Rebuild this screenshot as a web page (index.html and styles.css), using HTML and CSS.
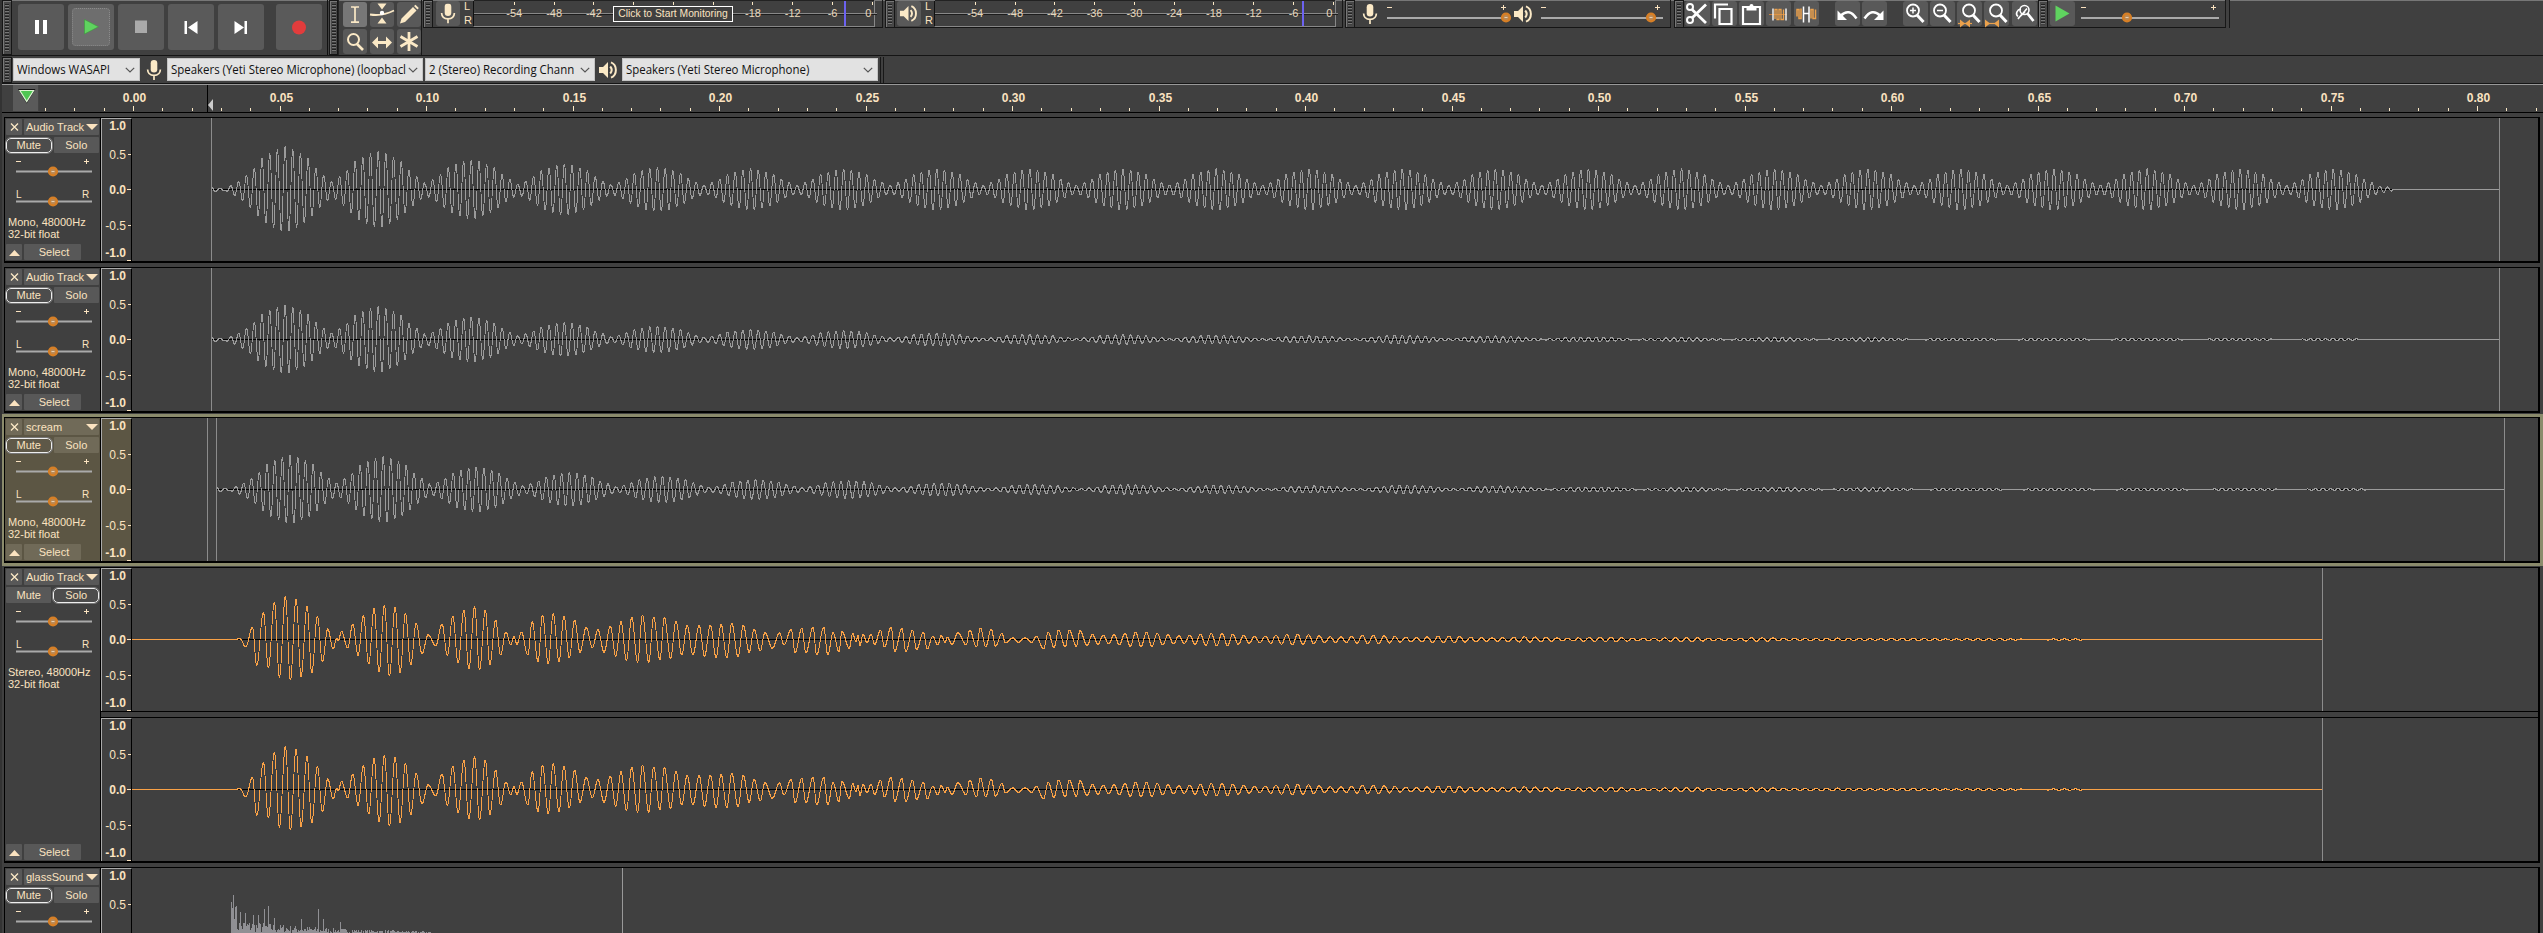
FILE: index.html
```html
<!DOCTYPE html>
<html lang="en">
<head>
<meta charset="utf-8">
<title>Audio editor</title>
<link rel="stylesheet" href="styles.css">
</head>
<body>
<svg class="defs" width="0" height="0">
  <symbol id="mic" viewBox="0 0 16 20"><rect x="4.7" y="0" width="6.6" height="12.5" rx="3.3" fill="#fbe9c6"/><path d="M1.6 9.5C1.8 13.5 4.5 15.3 8 15.3s6.200-1.800 6.400-5.800M8 15v5" fill="none" stroke="#fbe9c6" stroke-width="1.700"/></symbol>
  <symbol id="speaker" viewBox="0 0 20 18"><path d="M1 6h4l5-5v16l-5-5H1z" fill="#fbe9c6"/><path d="M12.200 5.500q3 3.500 0 7M13 1.300c6.500 2.700 6.500 12.700 0 15.400" fill="none" stroke="#fbe9c6" stroke-width="2"/></symbol>
  <symbol id="lens" viewBox="0 0 24 24"><circle cx="10" cy="9" r="6" fill="none" stroke="#fff" stroke-width="1.800"/><path d="M14 13.500l6.500 7" stroke="#fff" stroke-width="3"/></symbol>
  <symbol id="chev" viewBox="0 0 10 6"><path d="M.8.8L5 5 9.200.8" fill="none" stroke="#555" stroke-width="1.200"/></symbol>
</svg>
<div class="app">
  <header class="toolbars">
    <div class="grip tall"></div>
    <div class="transport">
      <div class="big"><svg viewBox="0 0 46 46"><path d="M17 16h4v14h-4zM25 16h4v14h-4z" fill="#fff"/></svg></div>
      <div class="big on"><svg viewBox="0 0 46 46"><path d="M16.500 15.500v14.500l14-7.200z" fill="#5fd35f" stroke="#3c9a3c" stroke-width=".6"/></svg></div>
      <div class="big"><svg viewBox="0 0 46 46"><path d="M17 16.500h12v12.500H17z" fill="#aaa"/></svg></div>
      <div class="big"><svg viewBox="0 0 46 46"><path d="M16.500 17h2.500v13h-2.500zM29.500 17v13L20 23.500z" fill="#fff"/></svg></div>
      <div class="big"><svg viewBox="0 0 46 46"><path d="M26.500 17H29v13h-2.500zM16.500 17v13l9.500-6.500z" fill="#fff"/></svg></div>
      <div class="big rec"><svg viewBox="0 0 46 46"><circle cx="23" cy="23.500" r="7" fill="#e23c3c"/></svg></div>
    </div>
    <div class="grip tall g2"></div>
    <div class="tools">
      <div class="btn on"><svg viewBox="0 0 24 24"><path d="M8 4.500h3l1 .7 1-.7h3M12 5v14M8 19.700h3l1-.7 1 .7h3" fill="none" stroke="#fbe9c6" stroke-width="1.700"/></svg></div>
      <div class="btn"><svg viewBox="0 0 24 24"><path d="M7.500 1h9L12 7zM7.500 21h9L12 15z" fill="#fbe9c6"/><path d="M0 12q12 2 24-4" fill="none" stroke="#fbe9c6" stroke-width="1.800"/><circle cx="12" cy="10.500" r="2.200" fill="#fff"/></svg></div>
      <div class="btn"><svg viewBox="0 0 24 24"><path d="M3 21l1.500-5L16 4.500l3.500 3.500L8 19.500zM17 3.500l1.500-1.300 3.300 3.300L20.500 7z" fill="#fbe9c6"/></svg></div>
      <div class="btn"><svg viewBox="0 0 24 24"><circle cx="10.500" cy="10" r="5.500" fill="none" stroke="#fbe9c6" stroke-width="2"/><path d="M14 14.500l6 6" stroke="#fbe9c6" stroke-width="2.600"/></svg></div>
      <div class="btn"><svg viewBox="0 0 24 24"><path d="M2 13l6-6v4.500h8V7l6 6-6 6v-4.500H8V19z" fill="#fbe9c6"/></svg></div>
      <div class="btn"><svg viewBox="0 0 24 24"><path d="M12 2.500v19M3.500 7l17 10M20.500 7l-17 10" stroke="#fbe9c6" stroke-width="2.800"/></svg></div>
    </div>
    <div class="grip g3"></div>
    <div class="meterbar">
      <div class="btn"><svg viewBox="0 0 24 24"><use href="#mic" x="4" y="2" width="16" height="20"/></svg></div>
      <div class="lr"><span>L</span><span>R</span></div>
      <div class="meter" data-first="40.3" data-cursor="371" data-covered="-36 -30 -24"><span class="monitor">Click to Start Monitoring</span></div>
    </div>
    <div class="grip g4"></div>
    <div class="meterbar play">
      <div class="btn"><svg viewBox="0 0 24 24"><use href="#speaker" x="2" y="3" width="19" height="18"/></svg></div>
      <div class="lr"><span>L</span><span>R</span></div>
      <div class="meter" data-first="40.3" data-cursor="368" data-covered=""></div>
    </div>
    <div class="grip g5"></div>
    <div class="mixer">
      <svg class="mixmic"><use href="#mic"/></svg>
      <div class="slide" data-w="122" data-k="119"></div>
      <svg class="mixspk"><use href="#speaker"/></svg>
      <div class="slide s2" data-w="122" data-k="110"></div>
    </div>
    <div class="grip g6"></div>
    <div class="edit">
      <div class="btn"><svg viewBox="0 0 24 24"><g fill="none" stroke="#fff" stroke-width="2"><circle cx="5" cy="5.500" r="3"/><circle cx="5" cy="18.500" r="3"/></g><path d="M7 8L21 21.500M7 16.500L21 3" stroke="#fff" stroke-width="2.800"/></svg></div>
      <div class="btn"><svg viewBox="0 0 24 24"><path d="M3 17V3h13M7.500 7.500h12v15h-12z" fill="none" stroke="#fff" stroke-width="2.200"/></svg></div>
      <div class="btn"><svg viewBox="0 0 24 24"><path d="M4 5.500h17v17H4z" fill="none" stroke="#fff" stroke-width="2.200"/><path d="M7.500 4.500h3a2 2 0 0 1 4 0h3V9h-10z" fill="#fff"/></svg></div>
      <div class="btn"><svg viewBox="0 0 24 24"><path d="M3 13h18" stroke="#c87e3c"/><path d="M7 7v12M20 7v12" stroke="#eee" stroke-width="1.500"/><path d="M9 17.500V8h2v10h2V8h2v10h2.500V8" fill="none" stroke="#eba14c" stroke-width="1.300"/></svg></div>
      <div class="btn"><svg viewBox="0 0 24 24"><path d="M9.500 12H15" stroke="#fff" stroke-width="1.500"/><path d="M9.500 5v16M15 5v16" stroke="#fff" stroke-width="1.500"/><path d="M3 15V8h2v9h2V7M17 17V8h2v9h2.500V8" fill="none" stroke="#eba14c" stroke-width="1.500"/></svg></div>
      <div class="btn undo"><svg viewBox="0 0 24 24"><path d="M2.500 9v9.500H12z" fill="#fff"/><path d="M6 14q8-8 15.500 3" fill="none" stroke="#fff" stroke-width="2.500"/></svg></div>
      <div class="btn"><svg viewBox="0 0 24 24"><path d="M21.500 9v9.500H12z" fill="#fff"/><path d="M18 14q-8-8-15.500 3" fill="none" stroke="#fff" stroke-width="2.500"/></svg></div>
      <div class="btn zin"><svg viewBox="0 0 24 24"><use href="#lens" width="24" height="24"/><path d="M7 9h6M10 6v6" stroke="#fff" stroke-width="1.500"/></svg></div>
      <div class="btn"><svg viewBox="0 0 24 24"><use href="#lens" width="24" height="24"/><path d="M7 9h6" stroke="#fff" stroke-width="1.500"/></svg></div>
      <div class="btn"><svg viewBox="0 0 24 24"><use href="#lens" x="2" width="24" height="24"/><path d="M1 22h14" stroke="#eba14c" stroke-width="1.200"/><path d="M3 18l5 4-5 4zM13 18l-5 4 5 4z" fill="#eba14c"/></svg></div>
      <div class="btn"><svg viewBox="0 0 24 24"><use href="#lens" x="2" width="24" height="24"/><path d="M1 22h14" stroke="#eba14c" stroke-width="1.200"/><path d="M1 18l5 4-5 4zM15 18l-5 4 5 4z" fill="#eba14c"/></svg></div>
      <div class="btn"><svg viewBox="0 0 24 24"><g fill="none" stroke="#fff" stroke-width="1.600"><circle cx="12.500" cy="8.500" r="4.500"/><path d="M9 7.500c-4 .5-6 5-3 7.500M6 17l7-6.500M10 12.500L6 17.500M15 7l-5 6"/></g><path d="M15.500 12l6 7.500" stroke="#fff" stroke-width="2.800"/></svg></div>
    </div>
    <div class="grip g7"></div>
    <div class="speed">
      <div class="btn"><svg viewBox="0 0 24 24"><path d="M5.500 4v16l14-8z" fill="#5fd35f"/></svg></div>
      <div class="slide s3" data-w="138" data-k="46"></div>
    </div>
  </header>
  <div class="devices">
    <div class="grip"></div>
    <div class="combo host"><span>Windows WASAPI</span><svg><use href="#chev"/></svg></div>
    <svg class="devmic"><use href="#mic"/></svg>
    <div class="combo in"><span>Speakers (Yeti Stereo Microphone) (loopbacl</span><svg><use href="#chev"/></svg></div>
    <div class="combo chan"><span>2 (Stereo) Recording Chann</span><svg><use href="#chev"/></svg></div>
    <svg class="devspk"><use href="#speaker"/></svg>
    <div class="combo out"><span>Speakers (Yeti Stereo Microphone)</span><svg><use href="#chev"/></svg></div>
    <div class="devend"></div>
  </div>
  <div class="timeline">
    <div class="pinbox"><svg class="pin" viewBox="0 0 25 26"><path d="M5 4h17.500L13.700 18.500z" fill="#111"/><path d="M6.800 5.500h13.800L13.700 16.500z" fill="#4fc552" stroke="#dff5d4" stroke-width="1.200"/></svg></div>
    <svg class="ticks" id="ticks" width="2504" height="27"></svg>
  </div>
  <main class="tracks" id="tracks"></main>
</div>
<script src="app.js"></script>
</body>
</html>
```
FILE: styles.css
```css
* { box-sizing: border-box; }
body { margin: 0; background: #404040; color: #fbe3c0; font: 11px "Liberation Sans", Arial, sans-serif; overflow: hidden; }
.defs { position: absolute; }
svg { display: block; overflow: visible; }
.app { width: 2543px; height: 933px; overflow: hidden; border-left: 2px solid #333; }

/* toolbars */
.toolbars { display: flex; height: 56px; align-items: flex-start; border-bottom: 1px solid #151515; box-shadow: inset 0 1px #777; }
.grip { flex: none; width: 10px; height: 28px; border: 1px solid #161616; box-shadow: inset 1px 1px #777; display: flex; background: repeating-linear-gradient(#222 0 1px, #777 1px 2px, #404040 2px 3px) center / 4px 21px no-repeat #484848; }
.grip.tall { height: 55px; background-size: 4px 48px; }
.transport { flex: none; display: flex; gap: 4px; width: 316px; height: 55px; padding: 4px 0 0 6px; border-right: 1px solid #111; }
.big { width: 46px; height: 46px; background: #5a5a5a; border-radius: 3px; }
.big.on { background: #5e5e5e; position: relative; }
.big.on::before { content: ""; position: absolute; inset: 4px; background: #6e6e6e; border: 1px dotted #8b8b8b; border-radius: 4px; }
.big.on svg { position: relative; }
.rec { margin-left: 8px; }
.g2 { margin-left: 1px; width: 9px; }
.tools { flex: none; display: grid; grid-template-columns: repeat(3, 24px); grid-auto-rows: 25px; gap: 2px 3px; width: 84px; height: 55px; padding: 2px 0 0 4px; border-right: 1px solid #181818; border-left: 1px solid #222; }
.btn { flex: none; width: 24px; height: 25px; background: #595959; border-radius: 3px; }
.btn svg { width: 24px; height: 25px; }
.btn.on { background: #777; }
.g3 { margin-left: 1px; }
.meterbar { flex: none; display: flex; width: 450px; height: 28px; padding: 1px 0 0 3px; border-bottom: 1px solid #151515; border-right: 1px solid #181818; }
.meterbar.play { width: 448px; padding-left: 2px; }
.lr { width: 13px; padding-left: 4px; display: flex; flex-direction: column; font-size: 11px; line-height: 14px; margin-top: -2px; }
.meter { width: 402px; height: 26px; position: relative; border-left: 1px solid #111; border-bottom: 1px solid #888; border-right: 1px solid #888; }
.meter svg text { font-size: 11px; fill: #e8d8bc; }
.monitor { position: absolute; left: 139px; top: 5px; width: 120px; height: 16px; border: 1px solid #fff; background: #404040; text-align: center; line-height: 14px; font-size: 10.3px; white-space: nowrap; }
.g4 { margin-left: 2px; }
.g5 { margin-left: 2px; }
.mixer { flex: none; display: flex; width: 316px; height: 28px; padding: 0; border-bottom: 1px solid #151515; border-right: 1px solid #181818; }
.mixmic { width: 16px; height: 20px; margin: 4px 9px 0 7px; }
.mixspk { width: 20px; height: 18px; margin: 5px 8px 0 4px; }
.slide { height: 28px; }
.g6 { margin-left: 3px; }
.edit { flex: none; display: flex; gap: 2.150px; width: 354px; height: 28px; padding: 1px 0 0 1px; border-bottom: 1px solid #151515; }
.edit .btn, .speed .btn { width: 25px; }
.undo, .zin { margin-left: 14px; }
.speed { flex: none; display: flex; width: 178px; height: 28px; padding: 1px 0 0 2px; border-bottom: 1px solid #151515; border-right: 1px solid #181818; box-shadow: 3px 0 #404040, 4px 0 #181818; }
.s3 { margin: -1px 0 0 6px; }

.devices { display: flex; height: 28px; padding-top: 2px; border-bottom: 1px solid #151515; }
.devices .grip { height: 26px; margin-right: 1px; margin-top: -1px; }
.combo { flex: none; height: 23px; background: #e2e2e2; color: #111; border: 1px solid #c4c4c4; font: 12px/21px "Open Sans", "Noto Sans", sans-serif; display: flex; justify-content: space-between; padding: 0 4px 0 3px; white-space: nowrap; }
.combo svg { width: 10px; height: 6px; margin-top: 8px; flex: none; }
.combo span { transform-origin: 0 50%; transform: scaleX(.953); width: 0; }
.host { width: 127px; }
.devmic { width: 16px; height: 20px; margin: 2px 5px 0 6px; }
.in { width: 256px; margin-right: 2px; }
.chan { width: 170px; }
.devspk { width: 20px; height: 18px; margin: 3px 4px 0 3px; }
.out { width: 256px; }
.devend { width: 4px; border-right: 1px solid #181818; border-left: 1px solid #181818; margin: -1px 0 0 2px; }

.timeline { display: flex; height: 29px; border-top: 1px solid #999; border-bottom: 1px solid #000; }
.pinbox { width: 37px; height: 27px; padding-left: 11px; border-right: 1px solid #444; }
.pin { width: 25px; height: 26px; background: #5a5a5a; }
.ticks text { font-weight: bold; font-size: 12px; fill: #fbe3c0; }

/* tracks */
.tracks { padding: 4px 3px 0 2px; }
.track { height: 146px; margin-bottom: 4px; display: flex; border: 1px solid #000; border-right-width: 2px; border-bottom-width: 2px; position: relative; }
.track.stereo { height: 296px; }
.track.selected { outline: 3px solid #8b8b6c; }
.panel { flex: none; width: 96px; padding: 1px 1px 0 1px; border-right: 1px solid #000; display: flex; flex-direction: column; }
.selected .panel, .selected .vruler { background: #5c5644; }
.prow { display: flex; gap: 2px; height: 16px; flex: none; }
.prow > div { background: #585858; border-radius: 1px; line-height: 16px; height: 16px; }
.selected .prow > div { background: #706a58; }
.close svg, .fold svg { width: 16px; height: 16px; }
.close, .fold { width: 16px; flex: none; }
.title { width: 76px; display: flex; justify-content: space-between; padding-left: 2px; white-space: nowrap; font-size: 11px; }
.title svg { width: 12px; height: 6px; margin: 5px 1px 0 0; flex: none; }
.ms { margin-top: 2px; }
.ms > div { width: 46px; text-align: center; }
.ms > .down { border: 1.500px solid #eee; border-radius: 5px; line-height: 12px; height: 15px; margin: 1px 0; outline: 1px solid #777; outline-offset: 0; background: #4c4c4c; }
.selected .ms > .down { background: #5e5848; }
.sl { width: 94px; height: 30px; flex: none; }
.sl text { font-size: 10px; fill: #fbe3c0; }
.sl.first { margin-top: 3px; }
.info { line-height: 12px; padding-left: 2px; margin-top: 0; white-space: nowrap; }
.last { margin-top: auto; margin-bottom: 1px; }
.select { width: 57px; text-align: center; padding-left: 3px; }
.lanes { flex: 1; display: flex; flex-direction: column; justify-content: space-between; background: #404040; }
.lane { display: flex; height: 143px; }
.stereo .lane + .lane { border-top: 1px solid #000; height: 144px; }
.stereo .lane:first-child { border-bottom: 1px solid #000; height: 144px; }
.vruler { width: 31px; height: 143px; flex: none; border-right: 1px solid #000; border-top: 1px solid #aaa; border-left: 1px solid #aaa; }
.vruler text { font-size: 12px; fill: #fbe3c0; text-anchor: end; }
.wave { flex: 1; }
.b { font-weight: bold; }
```
FILE: app.js
```js
const knob = (x, y) => `<circle cx="${x}" cy="${y}" r="3.8" fill="#b98a58" stroke="#d67f26" stroke-width="2.6"/><path d="M${x - 1.5} ${y}h3" stroke="#e8cfae"/>`;

// toolbar sliders
document.querySelectorAll('.slide').forEach(el => {
  const w = +el.dataset.w, k = +el.dataset.k;
  el.innerHTML = `<svg width="${w}" height="27"><path d="M0 7.500h5M${w - 8} 7.500h5M${w - 5.500} 5v5" stroke="#fbe3c0"/><path d="M0 18h${w}" stroke="#aaa" stroke-width="2"/>${knob(k, 17.5)}</svg>`;
});

// level meters
document.querySelectorAll('.meter').forEach(el => {
  const covered = el.dataset.covered.split(' ');
  let s = '<path d="M0 12.500h403" stroke="#888"/><path d="M0 13.500h403" stroke="#1c1c1c"/><path d="M0 -.5h400" stroke="#222"/>';
  for (let i = 0; i < 10; i++) {
    const x = +el.dataset.first + i * 39.78, db = -54 + i * 6;
    s += `<path d="M${Math.floor(x) + .5} 1v3" stroke="#fbe9c6"/>`;
    if (!covered.includes(String(db))) s += `<text x="${db ? x : x - 4}" y="16" text-anchor="middle">${db}</text>`;
  }
  s += `<path d="M${el.dataset.cursor} 0v25" stroke="#6c62f0" stroke-width="2"/>`;
  el.insertAdjacentHTML('afterbegin', `<svg width="399" height="25">${s}</svg>`);
});

// time ruler, origin at x = 39
{
  let s = '';
  for (let i = -3; i <= 82; i++) {
    const x = Math.round(133 + i * 29.3) - 39 + .5, major = i % 5 === 0;
    s += `<path d="M${x} ${major ? 21 : 23}V26" stroke="#fbe9c6"/>`;
    if (major) s += `<text x="${x + 1}" y="17" text-anchor="middle">${(i / 100).toFixed(2)}</text>`;
  }
  s += '<path d="M168.5 0v27" stroke="#000"/><path d="M169 20l5-6v12z" fill="#ccc"/>';
  document.getElementById('ticks').innerHTML = s;
}

// waveforms: x is the page coordinate, the result is the height in pixels
const ENV = [1, .94, .84, .73, .49, .33, .18];
const BEAT = 93.1;
function beating(amps, shift, end) {
  return x => {
    x -= shift;
    if (x > end) return 0;
    if (x < 226) return 2 * Math.sin((x - 209) / 1.4) * (x < 219 ? 1 : .6);
    const n = Math.max(0, Math.round((x - 285) / BEAT));
    const d = x - 285 - n * BEAT, u = Math.abs(d) / 7.76;
    const i = Math.min(5, Math.floor(u));
    let e = ENV[i] + (ENV[i + 1] - ENV[i]) * (u - i);
    if (u > 6) e = Math.max(.03, .18 - (u - 6) * .09);
    if (end - x < 20) e *= (end - x) / 20;
    const a = n < amps.length ? amps[n] : amps[amps.length - 1];
    const th = 2 * Math.PI * d / BEAT;
    return a * e * Math.cos(12 * th + .15 * Math.sin(th));
  };
}
const steady = beating([42.5, 38, 29.5, 25.5, 22, 20.5], 0, 2395);
const fade = [34, 33, 22.5, 17, 13.3, 10, 9, 6.5, 5, 5, 4.4, 3.6, 4.4, 3.6, 2.5, 2, 2, 1.8, 1.5, 1.3, 1.3, 1.2, 1.1];
const fading = beating(fade, 0, 2373), scream = beating(fade, 5, 2376);

// alternating extremes [x, height]
const left = [[232, 0], [720, 2], [737, -22], [757, 36], [770, -77], [790, 81], [805, -85], [823, 112], [838, -113], [856, 128], [871, -121], [888, 121], [903, -110], [921, 100], [935, -100], [952, 70], [967, -66], [983, 32], [999, -28], [1010, 3], [1015, -3], [1024, 24], [1043, -25], [1058, 46], [1074, -47], [1090, 71], [1106, -73], [1122, 92], [1137, -97], [1153, 103], [1168, -109], [1185, 97], [1200, -98]].map((p, i) => i ? [p[0] / 3, p[1] / 3] : p);
const right = [12, 77, 24, -75, 36, 49, 49, -42, 63, 14, 80, -18, 94, 46, 106, -48, 118, 70, 130, -70, 143, 88, 154, -88, 167, 98, 178, -91, 191, 88, 201, -75, 214, 58, 225, -46, 237, 22, 248, -16, 255, 8, 262, -14, 272, 22, 286, -46, 296, 53, 309, -66, 319, 73, 332, -72, 343, 77, 356, -66, 367, 70, 379, -54, 391, 58, 403, -38, 417, 36, 431, -24, 443, 29, 457, -38, 471, 40, 483, -50, 495, 53, 507, -62, 519, 66, 532, -68, 543, 73, 557, -68, 568, 67, 582, -60, 592, 66, 606, -56, 618, 55, 631, -46, 643, 42, 656, -46, 670, 42, 682, -50, 695, 43, 708, -54, 719, 46, 732, -55, 743, 49, 757, -52, 769, 42, 782, -38, 793, 31, 807, -34, 817, 20, 834, -26, 850, 20, 860, -16, 876, 31, 885, -38, 900, 34, 909, -40, 925, 36, 933, -46, 949, 36, 958, -46, 970, 20, 983, -36, 990, 24, 1006, -26, 1014, 18, 1021, -6, 1026, 12, 1030, -18, 1037, 15, 1046, -10, 1055, 15, 1063, -15, 1076, 28, 1085, -22, 1100, 37, 1108, -36, 1124, 33, 1133, -36, 1148, 27, 1157, -30, 1172, 21, 1181, -28, 1193, 9, 1205, -16, 1212, 12, 1221, -8, 1226, 6, 1236, -14, 1250, 20, 1268, -16, 1276, 28, 1291, -22, 1300, 34, 1312, -22, 1324, 31, 1334, -20, 1348, 18, 1356, -10, 1373, 5, 1385, -8, 1400, 5, 1415, -8, 1425, 10, 1441, -28, 1452, 21, 1465, -24, 1475, 28, 1490, -22, 1499, 28, 1515, -20, 1523, 26];
for (let i = 0; i < right.length; i += 2) {
  const x = 400 + right[i] / 2.24;
  left.push([x, right[i + 1] / 3]);
}
for (let x = 1087, k = 1; x < 2110; x += 5.4, k++) {
  const a = x < 1500 ? 8 - (x - 1087) * .0127 : Math.max(.6, 2.75 - (x - 1500) * .0037);
  left.push([x, (k % 2 ? -1 : 1) * a * (.78 + .22 * Math.cos((x - 1065) / 12.3))]);
}
left.sort((p, q) => p[0] - q[0]);
function knots(x) {
  if (x < left[0][0] || x >= left[left.length - 1][0]) return 0;
  let i = 0;
  while (left[i + 1][0] <= x) i++;
  const [x0, y0] = left[i], [x1, y1] = left[i + 1];
  return y0 + (y1 - y0) * (1 - Math.cos(Math.PI * (x - x0) / (x1 - x0))) / 2;
}
let seed = 7;
const rnd = () => (seed = (seed * 16807) % 2147483647) / 2147483647;
const spikes = { 231: 31, 232: 25, 233: 38, 235: 26, 240: 21, 245: 20, 253: 18, 258: 18, 264: 24, 268: 27, 274: 15, 301: 14, 318: 24, 323: 14, 340: 11 };
// floor of 6 is the height hidden below the window edge
const glass = Array.from({ length: 200 }, (_, i) => 6 + (spikes[231 + i] || (i < 6 ? 14 : 0) + rnd() * (15 * Math.exp(-i / 95))));

// one pixel column per x, from the lowest to the highest sample in it
function drawWave(w) {
  const X = x => x - 132, base = 71;
  let s = '';
  if (w.glass) {
    let d = '';
    glass.forEach((h, i) => { d += `M${X(231 + i) + .5} ${base + 1}V${Math.round(base - h)}`; });
    s += `<path d="${d}" stroke="#909094"/><path d="M490.500 0V143" stroke="#999"/>`;
    return s;
  }
  s += `<path d="M${X(w.from)} ${base + .5}H${X(w.to)}" stroke="#000"/>`;
  let d = '';
  for (let x = w.from; x < w.to; x++) {
    let lo = 1e9, hi = -1e9;
    for (let k = 0; k < 8; k++) { const v = w.f(x + k / 8); lo = Math.min(lo, v); hi = Math.max(hi, v); }
    d += `M${X(x) + .5} ${base - Math.round(hi)}V${base + 1 - Math.round(lo)}`;
  }
  s += `<path d="${d}" stroke="${w.color}"/>`;
  for (const x of w.edges) s += `<path d="M${X(x) + .5} 0V143" stroke="#8c8c8c"/>`;
  return s;
}
const vruler = () => {
  const rows = [['1.0', 11, 1], ['0.5', 39.5, 0], ['0.0', 74.5, 1], ['-0.5', 110.5, 0], ['-1.0', 137.5, 1]];
  return `<svg class="vruler" shape-rendering="crispEdges">${rows.map(r => `<text x="24" y="${r[1]}" class="${r[2] ? 'b' : ''}">${r[0]}</text>`).join('')}<path d="M26 35.500h3M25 70.500h4M26 106.500h3M25 141.500h4" stroke="#fbe3c0"/></svg>`;
};
const sliderRow = (a, b, cls) => `<svg class="sl ${cls}" viewBox="0 0 94 30">${a === 'L' ? '<text x="10" y="12">L</text><text x="76" y="12">R</text>' : '<path d="M10 5.500h5M78 5.500h5M80.500 3v5" stroke="#fbe3c0"/>'}<path d="M10 ${b}h76" stroke="#aaa" stroke-width="2"/>${knob(47, b)}</svg>`;

const grey = '#9b9b9b', orange = '#f9a146';
const mono = (f, from, to, extra = []) => ({ f, from, to, color: grey, edges: [from, to, ...extra] });
const stereo = { f: knots, from: 132, to: 2322, color: orange, edges: [2322] };
const tracks = [
  { name: 'Audio Track', info: 'Mono', lanes: [mono(steady, 211, 2499)] },
  { name: 'Audio Track', info: 'Mono', lanes: [mono(fading, 211, 2499)] },
  { name: 'scream', info: 'Mono', cls: 'selected', lanes: [mono(scream, 216, 2504, [207])] },
  { name: 'Audio Track', info: 'Stereo', cls: 'stereo', solo: true, lanes: [stereo, stereo] },
  { name: 'glassSound', info: 'Mono', lanes: [{ glass: true }] }
];
document.getElementById('tracks').innerHTML = tracks.map(t => `
  <section class="track ${t.cls || ''}">
    <div class="panel">
      <div class="prow"><div class="close"><svg viewBox="0 0 16 16"><path d="M5 4.500l7 7M12 4.500l-7 7" stroke="#fbe9c6" stroke-width="1.300"/></svg></div><div class="title">${t.name}<svg viewBox="0 0 12 6"><path d="M0 0h12L6 6z" fill="#fbe3c0"/></svg></div></div>
      <div class="prow ms"><div class="${t.solo ? '' : 'down'}">Mute</div><div class="${t.solo ? 'down' : ''}">Solo</div></div>
      ${sliderRow('-', 15.5, 'first')}
      ${sliderRow('L', 15.5, '')}
      <div class="info">${t.info}, 48000Hz<br>32-bit float</div>
      <div class="prow last"><div class="fold"><svg viewBox="0 0 16 16"><path d="M3 12h11L8.500 6z" fill="#fbe3c0"/></svg></div><div class="select">Select</div></div>
    </div>
    <div class="lanes">${t.lanes.map(l => `<div class="lane">${vruler()}<svg class="wave" width="2405" height="143" shape-rendering="crispEdges">${drawWave(l)}</svg></div>`).join('')}</div>
  </section>`).join('');
```
